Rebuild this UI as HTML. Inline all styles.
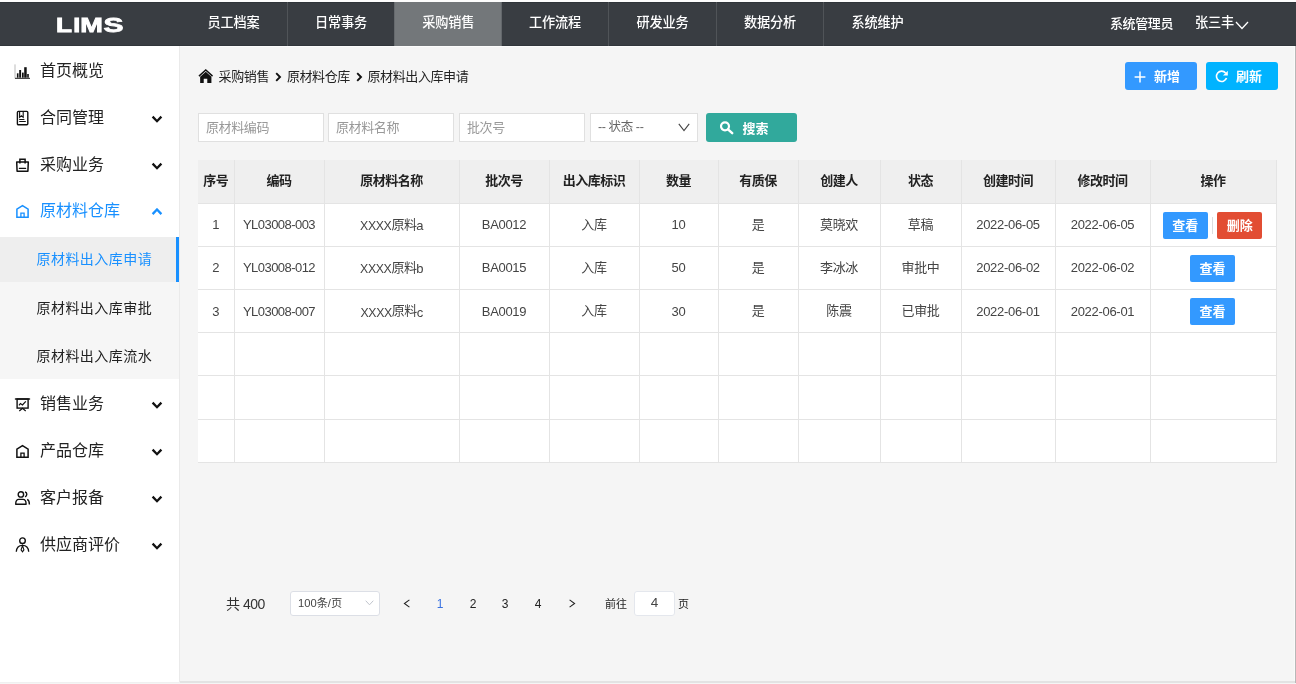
<!DOCTYPE html>
<html lang="zh-CN">
<head>
<meta charset="utf-8">
<title>LIMS</title>
<style>
*{box-sizing:border-box;margin:0;padding:0}
html,body{width:1296px;height:684px;overflow:hidden;background:#f5f5f5}
body{position:relative;font-family:"Liberation Sans","Noto Sans CJK SC",sans-serif;color:#333;font-size:13px}
.abs{position:absolute}
#hdr{left:0;top:2px;width:1296px;height:44px;background:#393d42;border-top:1px solid #30353a;border-bottom:1px solid #31363b}
#topwhite{left:0;top:0;width:1296px;height:2px;background:#fdfdfd}
.nav{top:2px;height:44px;width:107px;color:#fff;font-size:13.2px;letter-spacing:-.2px;font-weight:500;text-align:center;line-height:41px;border-right:1px solid #505458}
.nav.on{background:#73777a;border-right-color:#63676b;border-left:1px solid #666a6e;top:1.5px;height:45px;line-height:42px}
.nav.last{border-right:none}
#side{left:0;top:46px;width:180px;height:636px;background:#fff;border-right:1px solid #eaeaea}
.mi{left:0;width:179px;height:47px;font-size:16px;color:#222;line-height:47px;padding-left:40px}
.mi svg.ic{position:absolute;left:14px;top:15px;width:17px;height:17px}
.mi svg.ch{position:absolute;left:150.5px;top:20.5px;width:12px;height:9px}
.mi.blue{color:#1890ff}
#sub{left:0;top:236.5px;width:179px;height:142px;background:#f6f6f6}
.si{left:0;width:179px;height:48px;font-size:14px;letter-spacing:.45px;color:#222;line-height:48px;padding-left:36.5px}
.si.on{background:#eeeeee;color:#1890ff;border-right:3px solid #1890ff;height:45.5px;line-height:45px}
.bcx{top:66.5px;height:20px;line-height:20px;font-size:13px;letter-spacing:-.4px;color:#222;white-space:nowrap}
.btn{color:#fff;font-weight:bold;font-size:13px;letter-spacing:0;border-radius:3px;height:29px;line-height:29px;white-space:nowrap}
.inp{top:113px;height:29px;width:126px;background:#fff;border:1px solid #e0e0e0;font-size:13px;letter-spacing:-.4px;color:#999;line-height:27px;padding-left:7px;white-space:nowrap}
table{position:absolute;left:198px;top:160px;width:1078px;border-collapse:collapse;table-layout:fixed;background:#fff}
th,td{border:1px solid #e4e4e4;text-align:center;font-size:13px;height:43.2px;padding:0;white-space:nowrap;color:#444;font-weight:normal}
th{background:#efefef;font-weight:bold;color:#222;letter-spacing:-.5px;border-top:none;padding-bottom:4px}
td{letter-spacing:-.3px}
table tr td:first-child, table tr th:first-child{border-left:none}
.tb{position:relative;top:.3px;display:inline-block;color:#fff;font-weight:bold;font-size:13px;letter-spacing:0;height:27px;line-height:28px;width:45px;border-radius:2px;vertical-align:middle}
.pg{top:593px;height:22px;line-height:22px;font-size:12px;color:#333;white-space:nowrap}
.pn{width:20px;text-align:center;font-size:12px;color:#222}
.dv{display:inline-block;width:1px;height:17px;background:#ddd;margin:0 4px 0 4.5px;vertical-align:middle;position:relative;top:.7px}
td:last-child{padding-right:1px}
td.c2{letter-spacing:-.55px}td.c3{letter-spacing:-.6px}.xx{font-size:12.3px;letter-spacing:-.35px}
#wrap{position:absolute;left:0;top:0;width:1296px;height:684px;will-change:transform}
td.cj{padding-bottom:3px}
.up{position:relative;top:-1.5px}
</style>
</head>
<body>
<div id="wrap">
<div class="abs" id="topwhite"></div>
<div class="abs" id="hdr"></div>
<svg class="abs" style="left:50px;top:10px" width="80" height="30" viewBox="0 0 80 30"><g font-family="Liberation Sans, sans-serif" font-weight="bold" font-size="19.7" fill="#fff" stroke="#fff" stroke-width="0.8"><text x="6" y="21.5" textLength="16" lengthAdjust="spacingAndGlyphs">L</text><text x="23.3" y="21.5" textLength="7" lengthAdjust="spacingAndGlyphs">I</text><text x="30.2" y="21.5" textLength="22.6" lengthAdjust="spacingAndGlyphs">M</text><text x="53.6" y="21.5" textLength="20" lengthAdjust="spacingAndGlyphs">S</text></g></svg>
<div class="abs nav" style="left:180px;width:108px">员工档案</div>
<div class="abs nav" style="left:288px;width:107px">日常事务</div>
<div class="abs nav on" style="left:394px;width:107.5px;padding-left:1px">采购销售</div>
<div class="abs nav" style="left:502px;width:107px">工作流程</div>
<div class="abs nav" style="left:609px;width:108px">研发业务</div>
<div class="abs nav" style="left:717px;width:107px">数据分析</div>
<div class="abs nav last" style="left:824px;width:107px">系统维护</div>
<div class="abs" style="left:1110px;top:14px;height:20px;line-height:20px;color:#fff;font-size:13px;letter-spacing:-.4px;font-weight:500;white-space:nowrap">系统管理员</div>
<div class="abs" style="left:1195px;top:13px;height:20px;line-height:20px;color:#fff;font-size:13.2px;letter-spacing:-.2px;font-weight:500;white-space:nowrap">张三丰</div>
<svg class="abs" style="left:1235px;top:21px" width="14" height="9" viewBox="0 0 14 9"><path d="M1 1 L7 7.5 L13 1" fill="none" stroke="#fff" stroke-width="1.3"/></svg>

<div class="abs" id="side"></div>
<div class="abs mi" style="top:47px"><svg class="ic" viewBox="0 0 17 17"><rect x="0.5" y="2.4" width="1" height="14" fill="#bbb"/><rect x="1" y="15.8" width="15" height="1.1" fill="#333"/><rect x="2.9" y="11.3" width="1.6" height="4.4" fill="#111"/><rect x="5.2" y="8" width="1.9" height="7.7" fill="#111"/><rect x="8" y="10.6" width="1.7" height="5.1" fill="#111"/><rect x="10.2" y="5.2" width="2.5" height="10.5" fill="#111"/><rect x="13.2" y="12" width="1.6" height="3.7" fill="#111"/></svg>首页概览</div>
<div class="abs mi" style="top:94px"><svg class="ic" viewBox="0 0 17 17"><g transform="translate(0,0.8)"><rect x="3.4" y="1.6" width="10.4" height="13.4" rx="1" fill="none" stroke="#111" stroke-width="1.4"/><path d="M5.6 1.8 V7.6 L7.4 6 L9.2 7.6 V1.8" fill="none" stroke="#111" stroke-width="1.1"/><path d="M5.2 9.7 H10.4 M5.2 11.7 H11.8" stroke="#111" stroke-width="1.1"/></g></svg>合同管理<svg class="ch" viewBox="0 0 12 9"><path d="M1.6 1.6 L6 6.2 L10.4 1.6" fill="none" stroke="#111" stroke-width="2.3"/></svg></div>
<div class="abs mi" style="top:141px"><svg class="ic" viewBox="0 0 17 17"><path d="M2.7 6.1 H14.3 L13.9 15.2 H3.1 Z" fill="none" stroke="#111" stroke-width="1.5" stroke-linejoin="round"/><path d="M5.9 7.4 V3.3 H11.1 V7.4" fill="none" stroke="#111" stroke-width="1.5"/><path d="M5.4 12.4 H11.6" stroke="#111" stroke-width="1.3" stroke-linecap="round"/></svg>采购业务<svg class="ch" viewBox="0 0 12 9"><path d="M1.6 1.6 L6 6.2 L10.4 1.6" fill="none" stroke="#111" stroke-width="2.3"/></svg></div>
<div class="abs mi blue" style="top:187px"><svg class="ic" viewBox="0 0 17 17"><path d="M2.9 15.2 V7.2 L8.5 3.6 L14.1 7.2 V15.2 Z" fill="none" stroke="#1890ff" stroke-width="1.5"/><path d="M6.9 15.2 V11.2 H10.1 V15.2" fill="none" stroke="#1890ff" stroke-width="1.3"/></svg>原材料仓库<svg class="ch" viewBox="0 0 12 9"><path d="M1.6 6.1 L6 1.5 L10.4 6.1" fill="none" stroke="#1890ff" stroke-width="2.3"/></svg></div>
<div class="abs" id="sub"></div>
<div class="abs si on" style="top:236.5px">原材料出入库申请</div>
<div class="abs si" style="top:284px">原材料出入库审批</div>
<div class="abs si" style="top:332px">原材料出入库流水</div>
<div class="abs mi" style="top:380px"><svg class="ic" viewBox="0 0 17 17"><path d="M1.5 3.9 H15.5" stroke="#111" stroke-width="1.5" stroke-linecap="round"/><rect x="3.1" y="4" width="11" height="9.1" fill="none" stroke="#111" stroke-width="1.4"/><path d="M5 10.3 L6.4 8.5 L8.5 10 L11.8 6.4" fill="none" stroke="#111" stroke-width="1.2"/><path d="M5.3 16 L8.5 13.2 L11.7 16" fill="none" stroke="#111" stroke-width="1.2"/></svg>销售业务<svg class="ch" viewBox="0 0 12 9"><path d="M1.6 1.6 L6 6.2 L10.4 1.6" fill="none" stroke="#111" stroke-width="2.3"/></svg></div>
<div class="abs mi" style="top:427px"><svg class="ic" viewBox="0 0 17 17"><path d="M2.9 15.2 V7.2 L8.5 3.6 L14.1 7.2 V15.2 Z" fill="none" stroke="#111" stroke-width="1.5"/><path d="M6.9 15.2 V11.2 H10.1 V15.2" fill="none" stroke="#111" stroke-width="1.3"/></svg>产品仓库<svg class="ch" viewBox="0 0 12 9"><path d="M1.6 1.6 L6 6.2 L10.4 1.6" fill="none" stroke="#111" stroke-width="2.3"/></svg></div>
<div class="abs mi" style="top:474px"><svg class="ic" viewBox="0 0 17 17"><circle cx="6.9" cy="5.4" r="2.7" fill="none" stroke="#111" stroke-width="1.4"/><path d="M1.7 15.2 C1.7 11.6 3 10.4 4.8 10.4 H9 C10.8 10.4 12.1 11.6 12.1 15.2 Z" fill="none" stroke="#111" stroke-width="1.4" stroke-linejoin="round"/><path d="M11 2.9 C13.4 3.6 13.4 7 11 7.9" fill="none" stroke="#111" stroke-width="1.4"/><path d="M13.2 10.4 C14.8 11.2 15.4 12.8 15.4 15.6" fill="none" stroke="#111" stroke-width="1.4"/></svg>客户报备<svg class="ch" viewBox="0 0 12 9"><path d="M1.6 1.6 L6 6.2 L10.4 1.6" fill="none" stroke="#111" stroke-width="2.3"/></svg></div>
<div class="abs mi" style="top:521px"><svg class="ic" viewBox="0 0 17 17"><circle cx="8.5" cy="4.7" r="2.8" fill="none" stroke="#111" stroke-width="1.4"/><path d="M2.3 15.8 C2.6 11.4 5.4 9.4 8.5 9.4 C11.6 9.4 14.4 11.4 14.7 15.8" fill="none" stroke="#111" stroke-width="1.3"/><path d="M8.5 9.6 L7.1 13.8 L8.5 15.8 L9.9 13.8 Z" fill="none" stroke="#111" stroke-width="1.1"/></svg>供应商评价<svg class="ch" viewBox="0 0 12 9"><path d="M1.6 1.6 L6 6.2 L10.4 1.6" fill="none" stroke="#111" stroke-width="2.3"/></svg></div>

<svg class="abs" style="left:198.4px;top:68.5px" width="15.2" height="15" viewBox="0 0 16 16"><path d="M0.9 7.6 L8.2 1 L15.4 7.6" fill="none" stroke="#111" stroke-width="1.5"/><path d="M2.2 8.2 L8.2 2.9 L14.2 8.2 V14.8 H9.8 V10.4 H6 V14.8 H2.2 Z" fill="#111"/></svg>
<div class="abs bcx" style="left:218.6px">采购销售</div><svg class="abs" style="left:274.6px;top:71.5px" width="7" height="10" viewBox="0 0 7 10"><path d="M1.2 1.2 L5 5 L1.2 8.8" fill="none" stroke="#111" stroke-width="1.9"/></svg><div class="abs bcx" style="left:286.9px">原材料仓库</div><svg class="abs" style="left:356.2px;top:71.5px" width="7" height="10" viewBox="0 0 7 10"><path d="M1.2 1.2 L5 5 L1.2 8.8" fill="none" stroke="#111" stroke-width="1.9"/></svg><div class="abs bcx" style="left:367.5px">原材料出入库申请</div>

<div class="abs btn" style="left:1125px;top:61.7px;height:28.8px;width:72.1px;background:#3399ff;padding-left:29px"><svg style="position:absolute;left:9px;top:9px" width="12" height="12" viewBox="0 0 12 12"><path d="M6 0.6 V11.4 M0.6 6 H11.4" stroke="#fff" stroke-width="1.5"/></svg>新增</div>
<div class="abs btn" style="left:1206px;top:61.7px;height:28.8px;width:72.1px;background:#00b3ff;padding-left:30px"><svg style="position:absolute;left:8.5px;top:7.5px" width="14" height="14" viewBox="0 0 14 14"><path d="M10.63 3.96 A5.2 5.2 0 1 0 11.54 9.08" fill="none" stroke="#fff" stroke-width="1.6"/><path d="M12.8 1.7 V6.5 H8 Z" fill="#fff"/></svg>刷新</div>

<div class="abs inp" style="left:198px">原材料编码</div>
<div class="abs inp" style="left:328px">原材料名称</div>
<div class="abs inp" style="left:459px">批次号</div>
<div class="abs inp" style="left:590px;width:108px;color:#666;font-size:12.5px">-- 状态 --<svg style="position:absolute;left:87px;top:9px" width="12" height="9" viewBox="0 0 12 9"><path d="M0.8 0.8 L6 7.6 L11.2 0.8" fill="none" stroke="#444" stroke-width="1.1"/></svg></div>
<div class="abs btn" style="left:706.4px;top:113px;width:90.2px;background:#31a99c;padding-left:36px;font-size:13px;line-height:31px"><svg style="position:absolute;left:13.5px;top:7px" width="15" height="16" viewBox="0 0 15 16"><circle cx="5" cy="6.3" r="4" fill="none" stroke="#fff" stroke-width="2.2"/><path d="M8 9.3 L12.2 13.2" stroke="#fff" stroke-width="2.5" stroke-linecap="round"/></svg>搜索</div>

<table>
<colgroup><col style="width:36px"><col style="width:90px"><col style="width:135px"><col style="width:90px"><col style="width:90px"><col style="width:79px"><col style="width:80px"><col style="width:82px"><col style="width:81px"><col style="width:94px"><col style="width:95px"><col style="width:126px"></colgroup>
<tr><th>序号</th><th>编码</th><th>原材料名称</th><th>批次号</th><th>出入库标识</th><th>数量</th><th>有质保</th><th>创建人</th><th>状态</th><th>创建时间</th><th>修改时间</th><th>操作</th></tr>
<tr><td>1</td><td class="c2">YL03008-003</td><td class="c3"><span class="xx">XXXX</span><span class="up">原料</span>a</td><td>BA0012</td><td class="cj">入库</td><td>10</td><td class="cj">是</td><td class="cj">莫晓欢</td><td class="cj">草稿</td><td>2022-06-05</td><td>2022-06-05</td><td><span class="tb" style="background:#3399ff">查看</span><span class="dv"></span><span class="tb" style="background:#e24d33">删除</span></td></tr>
<tr><td>2</td><td class="c2">YL03008-012</td><td class="c3"><span class="xx">XXXX</span><span class="up">原料</span>b</td><td>BA0015</td><td class="cj">入库</td><td>50</td><td class="cj">是</td><td class="cj">李冰冰</td><td class="cj">审批中</td><td>2022-06-02</td><td>2022-06-02</td><td><span class="tb" style="background:#3399ff">查看</span></td></tr>
<tr><td>3</td><td class="c2">YL03008-007</td><td class="c3"><span class="xx">XXXX</span><span class="up">原料</span>c</td><td>BA0019</td><td class="cj">入库</td><td>30</td><td class="cj">是</td><td class="cj">陈震</td><td class="cj">已审批</td><td>2022-06-01</td><td>2022-06-01</td><td><span class="tb" style="background:#3399ff">查看</span></td></tr>
<tr><td></td><td></td><td></td><td></td><td></td><td></td><td></td><td></td><td></td><td></td><td></td><td></td></tr>
<tr><td></td><td></td><td></td><td></td><td></td><td></td><td></td><td></td><td></td><td></td><td></td><td></td></tr>
<tr><td></td><td></td><td></td><td></td><td></td><td></td><td></td><td></td><td></td><td></td><td></td><td></td></tr>
</table>

<div class="abs pg" style="left:226px;font-size:14px;letter-spacing:-.5px;color:#333">共 400</div>
<div class="abs" style="left:290px;top:591px;width:90px;height:25px;background:#fff;border:1px solid #dcdfe6;border-radius:3px;font-size:11.2px;line-height:23px;padding-left:7px;color:#444;white-space:nowrap">100条/页<svg style="position:absolute;left:74px;top:8px" width="9" height="6" viewBox="0 0 9 6"><path d="M0.7 0.7 L4.5 4.8 L8.3 0.7" fill="none" stroke="#c0c4cc" stroke-width="1"/></svg></div>
<svg class="abs" style="left:403px;top:599px" width="8" height="9" viewBox="0 0 8 9"><path d="M6.4 0.8 L1.4 4.5 L6.4 8.2" fill="none" stroke="#222" stroke-width="1.05"/></svg>
<div class="abs pg pn" style="left:430px;color:#3a72e0">1</div>
<div class="abs pg pn" style="left:463px">2</div>
<div class="abs pg pn" style="left:495px">3</div>
<div class="abs pg pn" style="left:528px">4</div>
<svg class="abs" style="left:568px;top:599px" width="8" height="9" viewBox="0 0 8 9"><path d="M1.6 0.8 L6.6 4.5 L1.6 8.2" fill="none" stroke="#222" stroke-width="1.05"/></svg>
<div class="abs pg" style="left:605px;font-size:11px;color:#222">前往</div>
<div class="abs" style="left:634px;top:591px;width:41px;height:25px;background:#fff;border:1px solid #e4e7ed;border-radius:3px;font-size:13.5px;line-height:21px;text-align:center;color:#444">4</div>
<div class="abs pg" style="left:678px;font-size:11px;color:#222">页</div>

<div class="abs" style="left:180px;top:681px;width:1116px;height:2px;background:#e3e3e3"></div>
<div class="abs" style="left:0;top:682px;width:180px;height:1px;background:#f0f0f0"></div>
<div class="abs" style="left:180px;top:46px;width:1115px;height:1px;background:#fcfcfc"></div>
<div class="abs" style="left:1294px;top:47px;width:1px;height:634px;background:#fafafa"></div>
<div class="abs" style="left:1295px;top:46px;width:1px;height:637px;background:#b8b8b8"></div>
</div>
</body>
</html>
